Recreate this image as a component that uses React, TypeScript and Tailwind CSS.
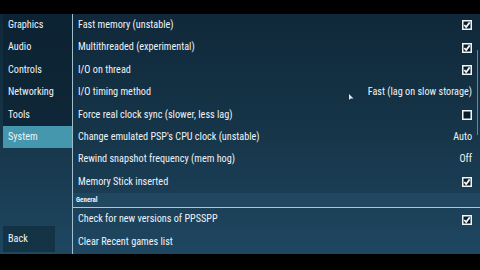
import React from 'react';

const tabs = ['Graphics', 'Audio', 'Controls', 'Networking', 'Tools', 'System'];

type Row = { label: string; value?: string; checked?: boolean };

const systemRows: Row[] = [
  { label: 'Fast memory (unstable)', checked: true },
  { label: 'Multithreaded (experimental)', checked: true },
  { label: 'I/O on thread', checked: true },
  { label: 'I/O timing method', value: 'Fast (lag on slow storage)' },
  { label: 'Force real clock sync (slower, less lag)', checked: false },
  { label: "Change emulated PSP's CPU clock (unstable)", value: 'Auto' },
  { label: 'Rewind snapshot frequency (mem hog)', value: 'Off' },
  { label: 'Memory Stick inserted', checked: true },
];

const generalRows: Row[] = [
  { label: 'Check for new versions of PPSSPP', checked: true },
  { label: 'Clear Recent games list' },
];

const Checkbox: React.FC<{ checked: boolean }> = ({ checked }) => (
  <svg width="10" height="10" viewBox="0 0 10 10" className="block">
    <rect x="0.75" y="0.75" width="8.5" height="8.5" fill="#0b1c28" stroke="#f2f5f7" strokeWidth="1.5" />
    {checked && <path d="M2.3 5 L4.2 7.1 L7.7 2.4" fill="none" stroke="#f2f5f7" strokeWidth="1.8" />}
  </svg>
);

const SettingRow: React.FC<{ row: Row; h: string }> = ({ row, h }) => (
  <div className={`flex ${h} items-center justify-between pl-[5px] pr-[8px]`}>
    <span>{row.label}</span>
    {row.value && <span>{row.value}</span>}
    {row.checked !== undefined && <Checkbox checked={row.checked} />}
  </div>
);

export default function App() {
  return (
    <div
      className="flex h-[270px] w-[480px] flex-col overflow-hidden bg-black text-[10.2px] leading-none text-[#eef3f6]"
      style={{ fontFamily: '"Roboto Condensed", "Liberation Sans Narrow", "DejaVu Sans Condensed", Roboto, sans-serif' }}
    >
      <div className="h-[14px] shrink-0" />
      <div className="relative flex h-[240px] shrink-0 bg-gradient-to-b from-[#10283a] via-[#163549] to-[#1f4762]">
        {/* sidebar */}
        <div className="flex w-[73px] shrink-0 flex-col border-r border-[#9fbfd0] pl-[3px]">
          {tabs.map((t) => (
            <div
              key={t}
              className={
                t === 'System'
                  ? 'flex h-[22.4px] items-center bg-[#4597ae] pl-[5px]'
                  : 'flex h-[22.4px] items-center bg-[#0b2131]/70 pl-[5px]'
              }
            >
              {t}
            </div>
          ))}
          <div className="flex-1" />
          <div className="mb-[2px] flex h-[26px] w-[52px] items-center bg-[#12303f]/80 pl-[5px]">Back</div>
        </div>

        {/* settings list */}
        <div className="relative flex-1">
          {systemRows.map((r) => (
            <SettingRow key={r.label} row={r} h="h-[22.4px]" />
          ))}
          <div className="flex h-[14px] items-center bg-[#2a5470]/40 pl-[3px] text-[7px] font-bold">General</div>
          <div className="h-px bg-[#a9c8d8]" />
          {generalRows.map((r) => (
            <SettingRow key={r.label} row={r} h="h-[22.8px]" />
          ))}
          <div className="absolute right-[2px] top-[36px] h-[85px] w-px bg-[#6f8795]" />
        </div>

        {/* mouse pointer */}
        <svg className="absolute left-[349px] top-[80px]" width="5" height="7" viewBox="0 0 5 7">
          <path d="M0 0 L0 6 L1.6 4.6 L4.5 4.4 Z" fill="#e6edf1" />
        </svg>
      </div>
      <div className="flex-1" />
    </div>
  );
}
